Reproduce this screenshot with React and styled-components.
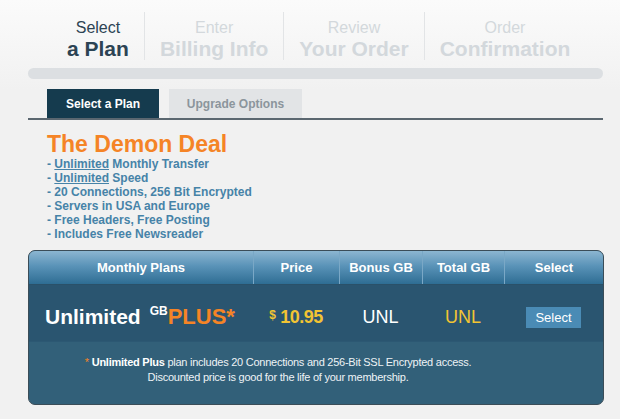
import React from 'react';
import styled, { createGlobalStyle } from 'styled-components';

const GlobalStyle = createGlobalStyle`
    body {
        margin: 0;
        background: #f1f1f1;
        font-family: "Liberation Sans", Arial, sans-serif;
    }
`;

const steps = [
    { top: 'Select', bottom: 'a Plan', active: true },
    { top: 'Enter', bottom: 'Billing Info' },
    { top: 'Review', bottom: 'Your Order' },
    { top: 'Order', bottom: 'Confirmation' },
];

const features = [
    { u: 'Unlimited', rest: ' Monthly Transfer' },
    { u: 'Unlimited', rest: ' Speed' },
    { rest: '20 Connections, 256 Bit Encrypted' },
    { rest: 'Servers in USA and Europe' },
    { rest: 'Free Headers, Free Posting' },
    { rest: 'Includes Free Newsreader' },
];

const columns = '224px 86px 83px 82px 1fr';

const Page = styled.div`
    width: 620px;
    height: 419px;
    padding: 12px 17px 0 28px;
    box-sizing: border-box;
    background: linear-gradient(#fbfbfb, #f1f1f1 90px);
`;

const Steps = styled.div`
    display: flex;
    padding-left: 24px;
    height: 48px;
`;

const Step = styled.div`
    display: flex;
    flex-direction: column;
    align-items: center;
    padding: 6px 15px 0;
    border-left: ${p => (p.$first ? 'none' : '1px solid #e2e4e6')};
    color: ${p => (p.$active ? '#2c4353' : '#d3d8dc')};
`;

const StepTop = styled.span`
    font-size: 16px;
    line-height: 19px;
`;

const StepBottom = styled.span`
    font-size: 21px;
    font-weight: bold;
    line-height: 24px;
`;

const Progress = styled.div`
    margin-top: 8px;
    height: 11px;
    border-radius: 6px;
    background: #dcdfe2;
`;

const Tabs = styled.div`
    display: flex;
    gap: 10px;
    margin-top: 10px;
    padding-left: 19px;
    border-bottom: 2px solid #5b6770;
`;

const Tab = styled.div`
    height: 29px;
    width: ${p => p.$w}px;
    display: flex;
    align-items: center;
    justify-content: center;
    font-size: 12px;
    font-weight: bold;
    background: ${p => (p.$active ? '#153b4e' : '#e2e4e6')};
    color: ${p => (p.$active ? '#ffffff' : '#8b959c')};
`;

const Deal = styled.div`
    padding: 11px 0 0 19px;
`;

const Title = styled.h1`
    margin: 0;
    font-size: 23px;
    line-height: 26px;
    color: #f58426;
    font-weight: bold;
`;

const FeatureList = styled.ul`
    list-style: none;
    margin: 0;
    padding: 0;
`;

const Feature = styled.li`
    font-size: 12px;
    line-height: 14px;
    font-weight: bold;
    color: #4683a8;
`;

const Table = styled.div`
    margin-top: 9px;
    width: 574px;
    border: 1px solid #3b4d58;
    border-radius: 7px;
    overflow: hidden;
    background: #326079;
`;

const HeadRow = styled.div`
    display: grid;
    grid-template-columns: ${columns};
    height: 33px;
    background: linear-gradient(#8cb6d1, #5a93b8 45%, #2e6d93);
    border-bottom: 1px solid #2a5169;
`;

const HeadCell = styled.div`
    display: flex;
    align-items: center;
    justify-content: center;
    color: #ffffff;
    font-size: 13px;
    font-weight: bold;
    border-left: ${p => (p.$first ? 'none' : '1px solid #7aa8c6')};
`;

const PlanRow = styled.div`
    display: grid;
    grid-template-columns: ${columns};
    height: 57px;
    padding-top: 8px;
    box-sizing: border-box;
    background: #2a5570;
    border-bottom: 1px solid #2c5873;
`;

const Cell = styled.div`
    display: flex;
    align-items: center;
    justify-content: ${p => (p.$left ? 'flex-start' : 'center')};
    padding-left: ${p => (p.$left ? '16px' : '0')};
    color: ${p => (p.$yellow ? '#f2c433' : '#ffffff')};
    font-size: 18px;
`;

const PlanName = styled.span`
    font-size: 21px;
    font-weight: bold;
    color: #ffffff;
    white-space: nowrap;

    sup {
        font-size: 12px;
        margin-left: 9px;
        vertical-align: 9px;
    }
`;

const Plus = styled.span`
    color: #f58426;
    font-size: 22px;
`;

const Price = styled.span`
    font-weight: bold;
    font-size: 18px;
    letter-spacing: -0.5px;
    color: #f2c433;

    small {
        font-size: 12px;
        margin-right: 5px;
        vertical-align: 4px;
    }
`;

const SelectButton = styled.button`
    width: 55px;
    height: 21px;
    border: none;
    background: #4a8bb5;
    color: #ffffff;
    font-family: inherit;
    font-size: 13px;
    padding: 0;
`;

const Footnote = styled.div`
    height: 55px;
    display: flex;
    flex-direction: column;
    justify-content: center;
    align-items: center;
    color: #eef3f6;
    font-size: 11px;
    line-height: 15px;
    letter-spacing: -0.25px;
    padding: 0 76px 7px 0;

    b {
        color: #ffffff;
    }
`;

const Star = styled.span`
    color: #f58426;
    margin-right: 3px;
`;

const App = () => (
    <Page>
        <GlobalStyle />
        <Steps>
            {steps.map((s, i) => (
                <Step key={s.bottom} $first={i === 0} $active={s.active}>
                    <StepTop>{s.top}</StepTop>
                    <StepBottom>{s.bottom}</StepBottom>
                </Step>
            ))}
        </Steps>
        <Progress />

        <Tabs>
            <Tab $active $w={112}>Select a Plan</Tab>
            <Tab $w={133}>Upgrade Options</Tab>
        </Tabs>

        <Deal>
            <Title>The Demon Deal</Title>
            <FeatureList>
                {features.map(f => (
                    <Feature key={f.rest}>
                        - {f.u && <u>{f.u}</u>}{f.rest}
                    </Feature>
                ))}
            </FeatureList>
        </Deal>

        <Table>
            <HeadRow>
                <HeadCell $first>Monthly Plans</HeadCell>
                <HeadCell>Price</HeadCell>
                <HeadCell>Bonus GB</HeadCell>
                <HeadCell>Total GB</HeadCell>
                <HeadCell>Select</HeadCell>
            </HeadRow>
            <PlanRow>
                <Cell $left>
                    <PlanName>
                        Unlimited<sup>GB</sup><Plus>PLUS*</Plus>
                    </PlanName>
                </Cell>
                <Cell>
                    <Price><small>$</small>10.95</Price>
                </Cell>
                <Cell>UNL</Cell>
                <Cell $yellow>UNL</Cell>
                <Cell>
                    <SelectButton>Select</SelectButton>
                </Cell>
            </PlanRow>
            <Footnote>
                <div>
                    <Star>*</Star><b>Unlimited Plus</b> plan includes 20 Connections and 256-Bit SSL Encrypted access.
                </div>
                <div>Discounted price is good for the life of your membership.</div>
            </Footnote>
        </Table>
    </Page>
);

export default App;
